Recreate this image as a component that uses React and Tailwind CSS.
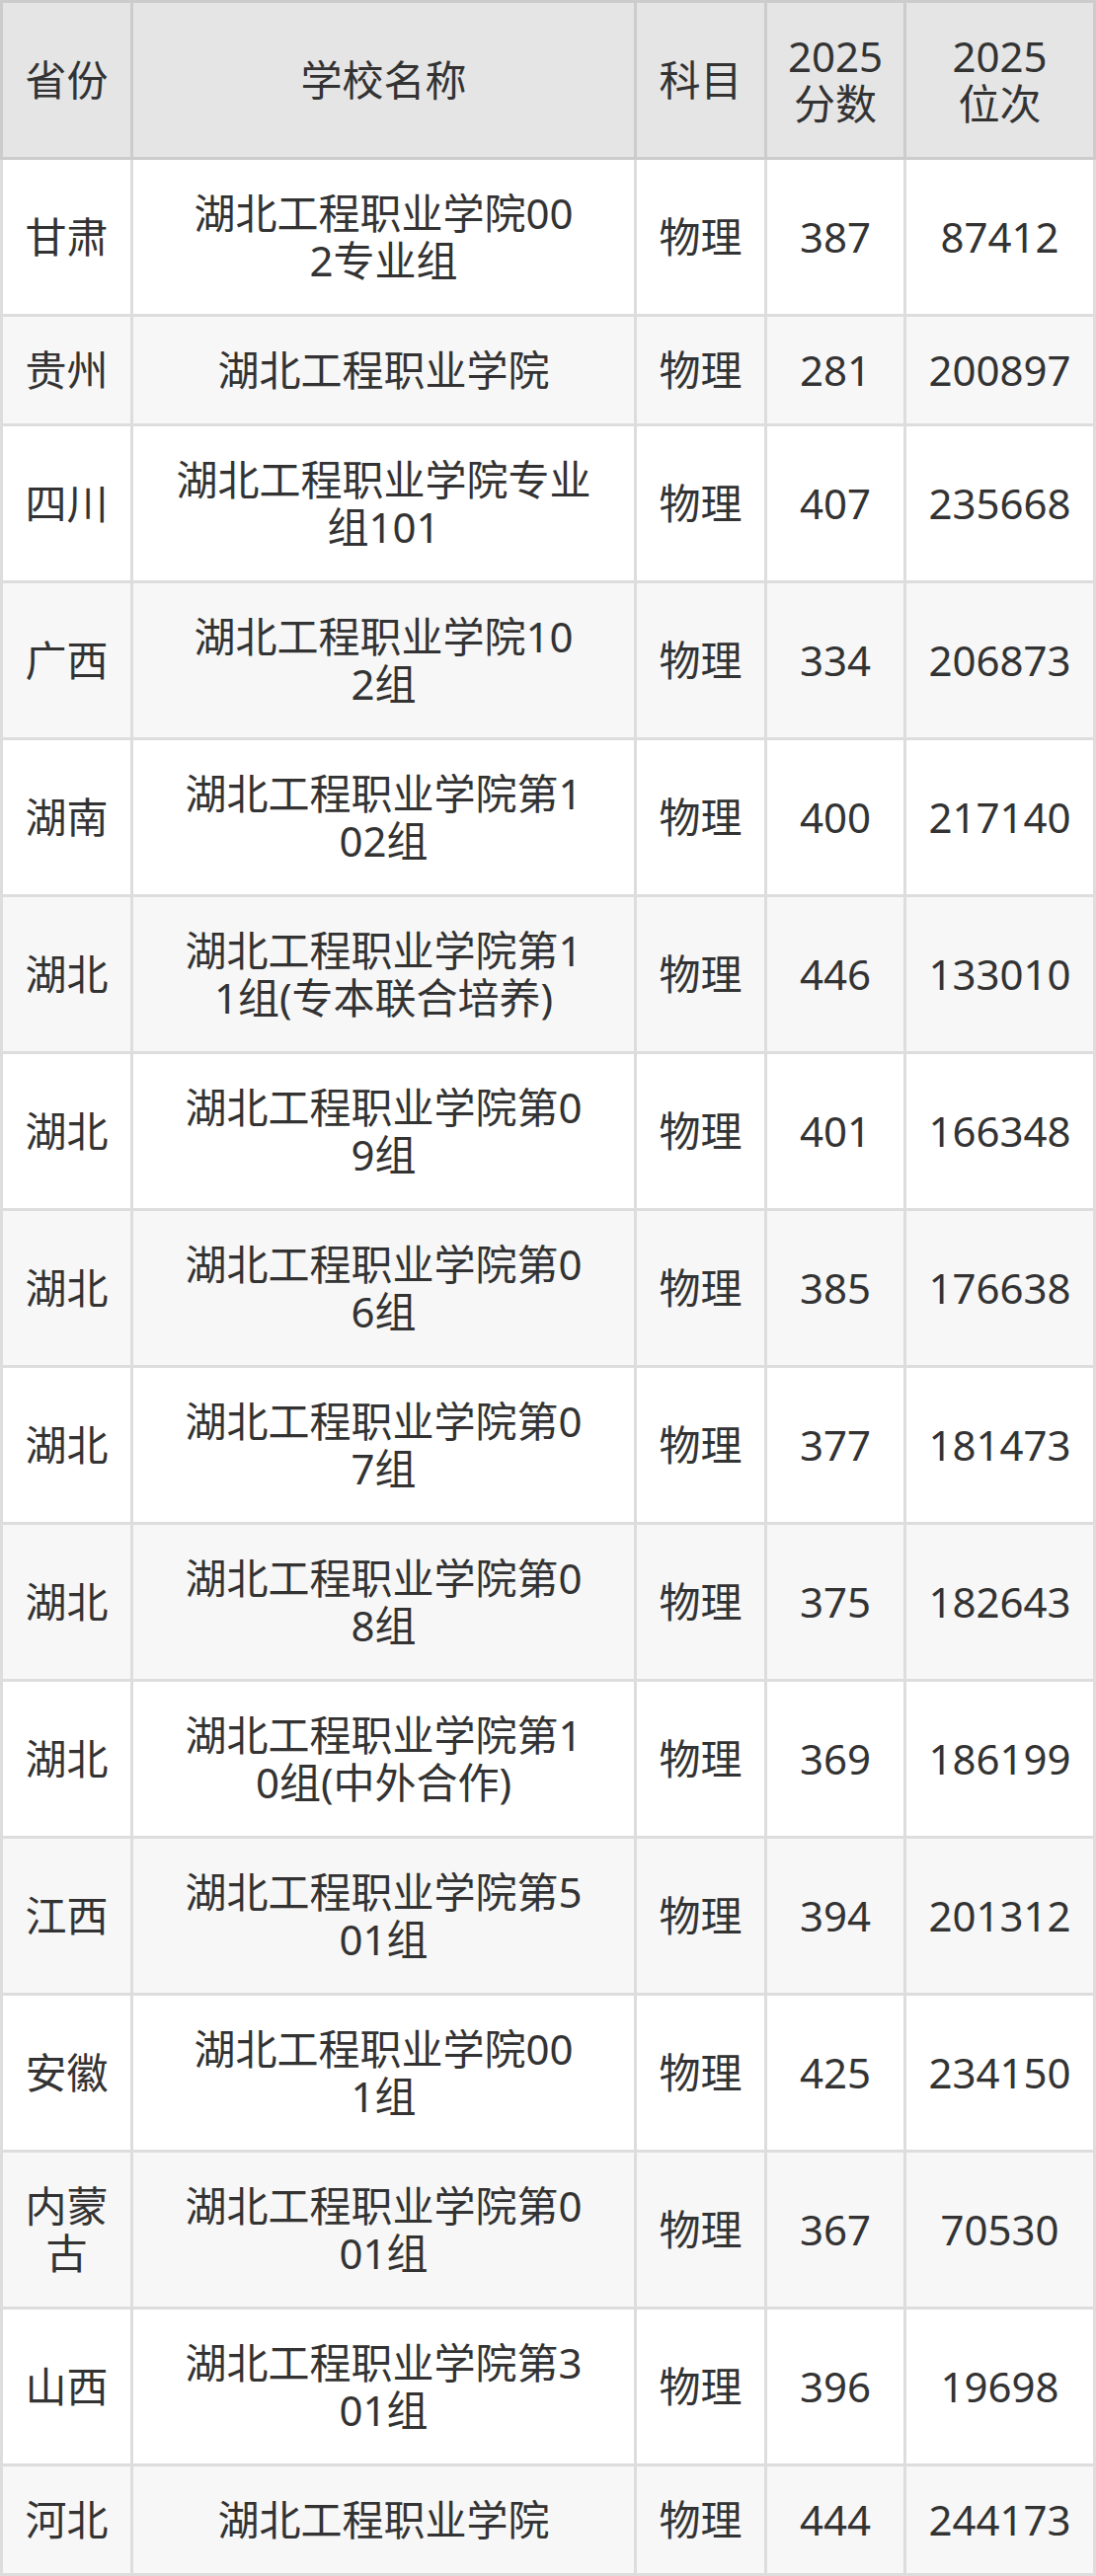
const header = ["省份", "学校名称", "科目", "2025\n分数", "2025\n位次"];

const rows = [
  ["甘肃", "湖北工程职业学院00\n2专业组", "物理", "387", "87412"],
  ["贵州", "湖北工程职业学院", "物理", "281", "200897"],
  ["四川", "湖北工程职业学院专业\n组101", "物理", "407", "235668"],
  ["广西", "湖北工程职业学院10\n2组", "物理", "334", "206873"],
  ["湖南", "湖北工程职业学院第1\n02组", "物理", "400", "217140"],
  ["湖北", "湖北工程职业学院第1\n1组(专本联合培养)", "物理", "446", "133010"],
  ["湖北", "湖北工程职业学院第0\n9组", "物理", "401", "166348"],
  ["湖北", "湖北工程职业学院第0\n6组", "物理", "385", "176638"],
  ["湖北", "湖北工程职业学院第0\n7组", "物理", "377", "181473"],
  ["湖北", "湖北工程职业学院第0\n8组", "物理", "375", "182643"],
  ["湖北", "湖北工程职业学院第1\n0组(中外合作)", "物理", "369", "186199"],
  ["江西", "湖北工程职业学院第5\n01组", "物理", "394", "201312"],
  ["安徽", "湖北工程职业学院00\n1组", "物理", "425", "234150"],
  ["内蒙\n古", "湖北工程职业学院第0\n01组", "物理", "367", "70530"],
  ["山西", "湖北工程职业学院第3\n01组", "物理", "396", "19698"],
  ["河北", "湖北工程职业学院", "物理", "444", "244173"],
];

const Cell = ({ text, first, head }) => (
  <div
    className={`flex flex-col items-center justify-center text-center py-[30px] border-r-[3px] border-b-[3px] ${
      first ? "border-l-[3px]" : ""
    } ${head ? "border-[#cccccc]" : "border-[#dddddd]"}`}
  >
    {text.split("\n").map((line, i) => (
      <span key={i} className="block whitespace-nowrap">
        {line}
      </span>
    ))}
  </div>
);

const Row = ({ cells, head, bg }) => (
  <div
    className={`grid grid-cols-[135px_510px_132px_141px_192px] ${bg} ${
      head ? "border-t-[3px] border-[#cccccc]" : ""
    }`}
  >
    {cells.map((c, i) => (
      <Cell key={i} text={c} first={i === 0} head={head} />
    ))}
  </div>
);

export default function App() {
  return (
    <div
      className="w-[1110px] bg-white text-[#333333] text-[42px] leading-[48px]"
      style={{ fontFamily: '"Noto Sans", "Noto Sans CJK SC", sans-serif' }}
    >
      <Row cells={header} head bg="bg-[#e5e5e5]" />
      {rows.map((r, i) => (
        <Row key={i} cells={r} bg={i % 2 === 0 ? "bg-white" : "bg-[#f7f7f7]"} />
      ))}
    </div>
  );
}
